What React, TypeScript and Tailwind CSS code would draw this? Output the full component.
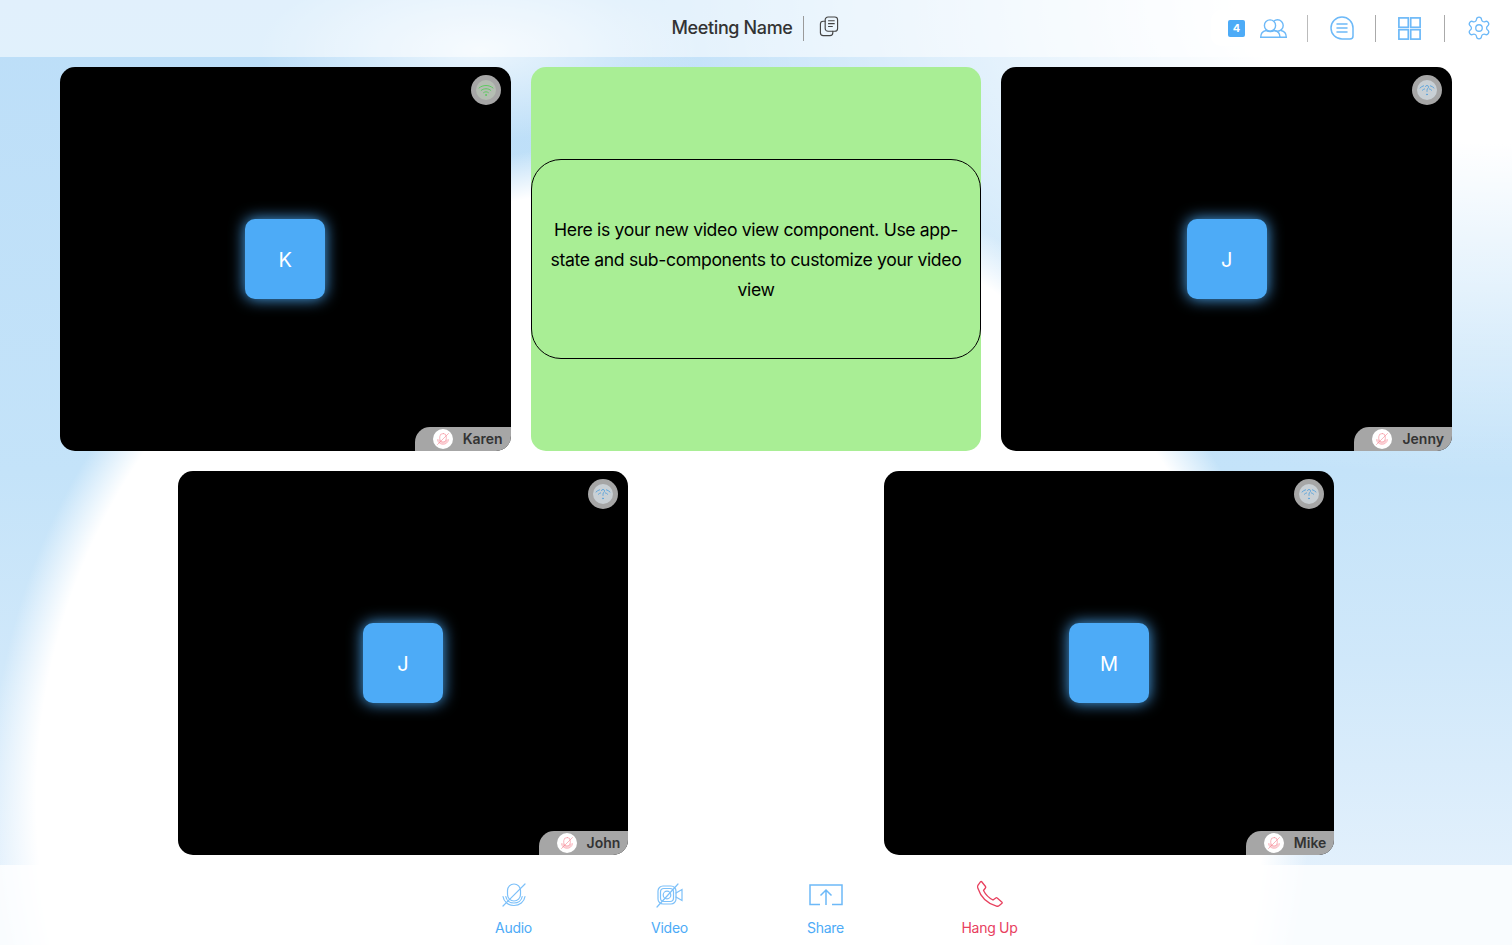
import React from 'react';
import { Settings } from 'lucide-react';

const BLUE = '#6db9f8';

const WifiIcon = ({ color, broken }: { color: string; broken?: boolean }) => (
  <svg width="16" height="16" viewBox="0 0 16 16" fill="none" stroke={color} strokeWidth="1" strokeLinecap="round">
    {broken ? (
      <>
        <path d="M1 6C2 5 3.2 4.2 4.6 3.8M11.4 3.8C12.8 4.2 14 5 15 6" />
        <path d="M3.4 8.2C4 7.6 4.8 7.2 5.6 6.9M10.4 6.9C11.2 7.2 12 7.6 12.6 8.2" />
        <path d="M6.4 4.4C6.6 3.2 9.5 3 9.6 4.8C9.7 6.2 8 6.2 8 8.4V9.4" />
        <circle cx="8" cy="12.4" r="0.5" fill={color} />
      </>
    ) : (
      <>
        <path d="M1 6C4.8 2.6 11.2 2.6 15 6" />
        <path d="M3.2 8.4C5.8 6.1 10.2 6.1 12.8 8.4" />
        <path d="M5.6 10.6C7 9.5 9 9.5 10.4 10.6" />
        <circle cx="8" cy="13" r="0.5" fill={color} />
      </>
    )}
  </svg>
);

const MicOffIcon = ({ size, color, strokeWidth = 1 }: { size: number; color: string; strokeWidth?: number }) => (
  <svg width={size} height={size} viewBox="0 0 24 24" fill="none" stroke={color} strokeWidth={strokeWidth} strokeLinecap="round">
    <rect x="5.5" y="1" width="13" height="17" rx="6.5" />
    <path d="M1 13.5C1.8 19 6.4 22.5 12 22.5C17.6 22.5 22.2 19 23 13.5" />
    <path d="M3.8 13.5C4.4 17.5 7.8 20 12 20C16.2 20 19.6 17.5 20.2 13.5" />
    <path d="M1 23L23 1" />
  </svg>
);

const Tile = ({
  letter,
  name,
  speaking,
}: {
  letter: string;
  name: string;
  speaking?: boolean;
}) => (
  <div className="relative flex h-[384px] w-[450.67px] shrink-0 items-center justify-center overflow-hidden rounded-[15px] bg-black">
    <div className="flex h-20 w-20 items-center justify-center rounded-[10px] bg-[#4dabf7] pt-px text-xl text-white shadow-[0_0_15px_#4dabf7]">
      {letter}
    </div>
    <div className="absolute right-[10px] top-[8px] flex h-[30px] w-[30px] items-center justify-center rounded-full bg-[#a6a6a6]">
      <div
        className={`flex h-5 w-5 items-center justify-center rounded-full ${
          speaking ? 'bg-[#b5beb3]' : 'bg-[#c9d0d5]'
        }`}
      >
        <WifiIcon color={speaking ? '#5fcb62' : '#5fa6dc'} broken={!speaking} />
      </div>
    </div>
    <div className="absolute bottom-0 right-0 flex h-6 items-center gap-[10px] rounded-tl-[15px] bg-[#a6a6a6] pl-[18px] pr-2">
      <div className="flex h-5 w-5 items-center justify-center rounded-full bg-white">
        <MicOffIcon size={12} color="#f36d7c" />
      </div>
      <span className="text-sm font-semibold leading-6 text-[#333333]">{name}</span>
    </div>
  </div>
);

const ControlButton = ({
  label,
  className,
  children,
}: {
  label: string;
  className: string;
  children: React.ReactNode;
}) => (
  <div className={`flex w-[156px] flex-col items-center ${className}`}>
    <div className="flex h-[34px] items-center justify-center">{children}</div>
    <span className="mt-[7px] text-sm leading-[18px] tracking-[-0.02em]">{label}</span>
  </div>
);

export default function App() {
  return (
    <div
      className="flex h-[945px] w-full flex-col overflow-hidden bg-[#ffffff] bg-[radial-gradient(circle_660px_at_650px_800px,#ffffff_93%,rgba(255,255,255,0)_100%),radial-gradient(ellipse_220px_90px_at_480px_50px,rgba(255,255,255,0.7)_0%,rgba(255,255,255,0)_100%),radial-gradient(ellipse_900px_480px_at_1512px_0px,#ffffff_30%,rgba(255,255,255,0)_100%),linear-gradient(180deg,#bcdef8_0%,#c4e3f9_50%,#d0e8fa_70%,#e2f0fc_92%)]"
      style={{ fontFamily: 'Inter, "Noto Sans", sans-serif' }}
    >
      <header className="relative flex h-[57px] shrink-0 items-center justify-center bg-white/55">
        <div className="-mt-px flex items-center pr-[2px]">
          <span className="text-[18px] font-medium leading-6 tracking-[-0.02em] text-[#333333]">Meeting Name</span>
          <div className="ml-[10px] h-[25px] w-px bg-[#9a9a9a]" />
          <svg className="ml-[15px] -mt-[3px]" width="20" height="21" viewBox="0 0 20 22" fill="none" stroke="#444444" strokeWidth="1.2" strokeLinecap="round">
            <rect x="6" y="1" width="13" height="15" rx="3" />
            <path d="M6 5.5H4C2.3 5.5 1 6.8 1 8.5V17.5C1 19.2 2.3 20.5 4 20.5H11C12.7 20.5 14 19.2 14 17.5V16" />
            <path d="M9.5 5H15.5M9.5 8H15.5M9.5 11H13.5" />
          </svg>
        </div>
        <div className="absolute right-5 top-[10px] flex items-center">
          <div className="flex h-[36px] w-[96px] items-center rounded-[10px] bg-white pl-[17px]">
            <div className="flex h-[17px] w-[17px] items-center justify-center rounded-[2px] bg-[#4dabf7] text-[11px] font-bold text-white">
              4
            </div>
            <svg className="ml-[15px]" width="27" height="19" viewBox="0 0 27 19" fill="none" stroke={BLUE} strokeWidth="1.4">
              <circle cx="10" cy="6.5" r="5.6" />
              <path d="M14 2C15 1 16.2 0.7 17.5 0.7C20.6 0.7 23.2 3.3 23.2 6.5C23.2 9.7 20.6 12.3 17.5 12.3C16.2 12.3 15 11.9 14 11" />
              <path d="M0.7 18.3C0.7 14.5 3 12.2 6 11.5C9 13 11.5 13 14.5 11.5C17.5 12.2 20 14.5 20 18.3H0.7Z" />
              <path d="M20 18.3H26.3C26.3 14.5 24 12.2 21 11.5" />
            </svg>
          </div>
          <div className="h-[27px] w-px bg-[#bbbbbb]" />
          <svg className="ml-[22px]" width="24" height="24" viewBox="0 0 24 24" fill="none" stroke={BLUE} strokeWidth="1.5" strokeLinecap="round">
            <path d="M12 1C5.9 1 1 5.9 1 12C1 18.1 5.9 23 12 23H20C21.7 23 23 21.7 23 20V12C23 5.9 18.1 1 12 1Z" />
            <path d="M7 8H17M7 12H17M7 16H17" />
          </svg>
          <div className="ml-[21px] h-[27px] w-px bg-[#aaaaaa]" />
          <svg className="ml-[22px]" width="23" height="23" viewBox="0 0 23 23" fill="none" stroke={BLUE} strokeWidth="1.7">
            <rect x="0.9" y="0.9" width="9.4" height="9.4" />
            <rect x="12.7" y="0.9" width="9.4" height="9.4" />
            <rect x="0.9" y="12.7" width="9.4" height="9.4" />
            <rect x="12.7" y="12.7" width="9.4" height="9.4" />
          </svg>
          <div className="ml-[23px] h-[27px] w-px bg-[#aaaaaa]" />
          <Settings className="ml-[21px]" size={26} color={BLUE} strokeWidth={1.2} />
        </div>
      </header>

      <main className="flex h-[808px] flex-col gap-5 px-[60px] py-[10px]">
        <div className="flex gap-5">
          <Tile letter="K" name="Karen" speaking />
          <div className="flex h-[384px] w-[450.67px] shrink-0 items-center rounded-[15px] bg-[#a9ee95]">
            <div className="flex h-[200px] w-full items-center justify-center rounded-[30px] border border-black px-[15px] pt-[2px] text-center text-[17.6px] leading-[30px] tracking-[-0.02em] text-black">
              Here is your new video view component. Use app-state and sub-components to customize your video view
            </div>
          </div>
          <Tile letter="J" name="Jenny" />
        </div>
        <div className="flex justify-around gap-5">
          <Tile letter="J" name="John" />
          <Tile letter="M" name="Mike" />
        </div>
      </main>

      <footer className="flex h-[80px] shrink-0 items-start justify-center bg-white/80 pr-[9px] pt-[13px]">
        <ControlButton label="Audio" className="text-[#4dabf7]">
          <MicOffIcon size={24} color="#7cc0f9" strokeWidth={1.2} />
        </ControlButton>
        <ControlButton label="Video" className="text-[#4dabf7]">
          <svg width="27" height="25" viewBox="0 0 27 25" fill="none" stroke="#7cc0f9" strokeWidth="1.2" strokeLinecap="round">
            <rect x="2" y="3" width="18" height="18" rx="5" />
            <rect x="4.5" y="5.5" width="13" height="13" rx="3.5" />
            <circle cx="11" cy="12" r="3.8" />
            <path d="M20 10L26 6.5V17.5L20 14" />
            <path d="M1 24L22 1" />
          </svg>
        </ControlButton>
        <ControlButton label="Share" className="text-[#4dabf7]">
          <svg width="34" height="22" viewBox="0 0 34 22" fill="none" stroke={BLUE} strokeWidth="1.5">
            <path d="M11 20.5H1V1H33V20.5H23" />
            <path d="M17 21V6M11.5 11.5L17 6L22.5 11.5" />
          </svg>
        </ControlButton>
        <ControlButton label="Hang Up" className="ml-2 text-[#e8405e]">
          <svg className="-mt-[2px]" width="28" height="28" viewBox="0 0 28 28" fill="none" stroke="#e8405e" strokeWidth="1.3" strokeLinejoin="round">
            <path d="M5.5 1.5L9.5 6.5C9.9 7 9.8 7.6 9.4 8L7.5 10.5C9.5 14.5 13 18 17 20L19.8 17.9C20.2 17.6 20.8 17.6 21.2 18L26 22.3C26.3 22.6 26.3 23 26 23.3L23.3 25.5C22.5 26.2 21.5 26.4 20.5 26.1C11.5 23.5 4.5 16.5 1.7 7.7C1.4 6.7 1.6 5.6 2.3 4.8L4.6 1.6C4.9 1.3 5.2 1.3 5.5 1.5Z" />
          </svg>
        </ControlButton>
      </footer>
    </div>
  );
}
